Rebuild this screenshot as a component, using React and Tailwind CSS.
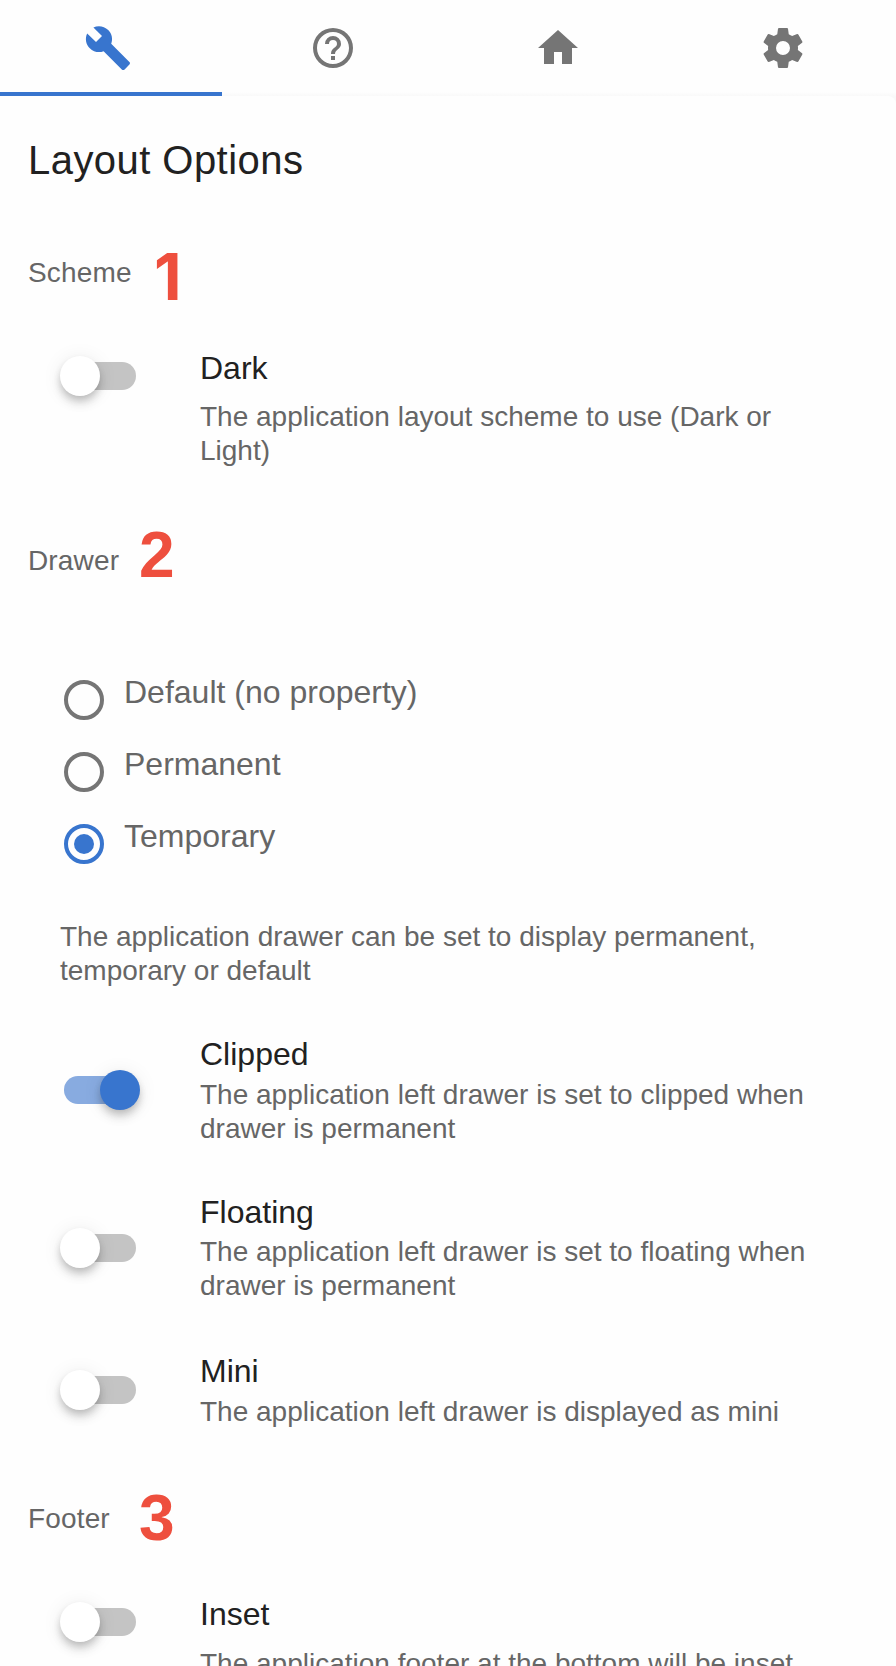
import React from "react";
import clsx from "clsx";

const ICONS = {
  wrench:
    "M22.7,19L13.6,9.9C14.5,7.6 14,4.9 12.1,3C10.1,1 7.1,0.6 4.7,1.7L9,6L6,9L1.6,4.7C0.4,7.1 0.9,10.1 2.9,12.1C4.8,14 7.5,14.5 9.8,13.6L18.9,22.7C19.3,23.1 19.9,23.1 20.3,22.7L22.6,20.4C23.1,20 23.1,19.3 22.7,19Z",
  help:
    "M11,18H13V16H11V18M12,2A10,10 0 0,0 2,12A10,10 0 0,0 12,22A10,10 0 0,0 22,12A10,10 0 0,0 12,2M12,20C7.59,20 4,16.41 4,12C4,7.59 7.59,4 12,4C16.41,4 20,7.59 20,12C20,16.41 16.41,20 12,20M12,6A4,4 0 0,0 8,10H10A2,2 0 0,1 12,8A2,2 0 0,1 14,10C14,12 11,11.75 11,15H13C13,12.75 16,12.5 16,10A4,4 0 0,0 12,6Z",
  home: "M10,20V14H14V20H19V12H22L12,3L2,12H5V20H10Z",
  cog:
    "M12,15.5A3.5,3.5 0 0,1 8.5,12A3.5,3.5 0 0,1 12,8.5A3.5,3.5 0 0,1 15.5,12A3.5,3.5 0 0,1 12,15.5M19.43,12.97C19.47,12.65 19.5,12.33 19.5,12C19.5,11.67 19.47,11.34 19.43,11L21.54,9.37C21.73,9.22 21.78,8.95 21.66,8.73L19.66,5.27C19.54,5.05 19.27,4.96 19.05,5.05L16.56,6.05C16.04,5.66 15.5,5.32 14.87,5.07L14.5,2.42C14.46,2.18 14.25,2 14,2H10C9.75,2 9.54,2.18 9.5,2.42L9.13,5.07C8.5,5.32 7.96,5.66 7.44,6.05L4.95,5.05C4.73,4.96 4.46,5.05 4.34,5.27L2.34,8.73C2.21,8.95 2.27,9.22 2.46,9.37L4.57,11C4.53,11.34 4.5,11.67 4.5,12C4.5,12.33 4.53,12.65 4.57,12.97L2.46,14.63C2.27,14.78 2.21,15.05 2.34,15.27L4.34,18.73C4.46,18.95 4.73,19.03 4.95,18.95L7.44,17.94C7.96,18.34 8.5,18.68 9.13,18.93L9.5,21.58C9.54,21.82 9.75,22 10,22H14C14.25,22 14.46,21.82 14.5,21.58L14.87,18.93C15.5,18.67 16.04,18.34 16.56,17.94L19.05,18.95C19.27,19.03 19.54,18.95 19.66,18.73L21.66,15.27C21.78,15.05 21.73,14.78 21.54,14.63L19.43,12.97Z",
};

function Tab({ icon, active }) {
  return (
    <button
      className={clsx(
        "flex w-[225px] shrink-0 flex-col items-center",
        active ? "text-[#3875ce]" : "text-[#757575]"
      )}
    >
      <svg viewBox="0 0 24 24" className="mt-6 mr-[3px] size-12" fill="currentColor">
        <path d={ICONS[icon]} />
      </svg>
      <span
        className={clsx(
          "mt-5 h-1 w-full",
          active ? "bg-[#3875ce]" : "bg-linear-to-b from-[#fefefe] to-[#f9f9f9]"
        )}
      />
    </button>
  );
}

function Switch({ on, className }) {
  return (
    <div
      role="switch"
      aria-checked={!!on}
      className={clsx("relative flex h-10 w-20 shrink-0 items-center", className)}
    >
      <span
        className={clsx(
          "ml-1 h-7 w-[72px] rounded-full",
          on ? "bg-[#88abe0]" : "bg-[#c4c4c4]"
        )}
      />
      <span
        className={clsx(
          "absolute top-0 size-10 rounded-full shadow-[0_4px_8px_-2px_rgba(0,0,0,0.2),0_8px_10px_0_rgba(0,0,0,0.1),0_2px_20px_0_rgba(0,0,0,0.08)]",
          on ? "right-0 bg-[#3875ce]" : "left-0 bg-white"
        )}
      />
    </div>
  );
}

function Heading({ label, number, labelClass, numberClass, className }) {
  return (
    <div className={clsx("flex h-16 items-start pl-7", className)}>
      <h2
        className={clsx(
          "shrink-0 text-[28px] leading-[34px] tracking-[0.15px] text-[#666]",
          labelClass
        )}
      >
        {label}
      </h2>
      <span
        className={clsx(
          "text-[64px] leading-[64px] font-bold text-[#ee4f3e]",
          numberClass
        )}
      >
        {number}
      </span>
    </div>
  );
}

function Option({ title, on, className, switchClass, descClass, children }) {
  return (
    <div className={clsx("flex items-start pl-[60px]", className)}>
      <Switch on={on} className={switchClass} />
      <div className="ml-[60px] min-w-0">
        <h3 className="text-[32px] leading-10 text-[#212121]">{title}</h3>
        <p
          className={clsx(
            "text-[28px] leading-[33.6px] whitespace-nowrap text-[#666]",
            descClass
          )}
        >
          {children}
        </p>
      </div>
    </div>
  );
}

function Radio({ label, checked }) {
  return (
    <div className="flex h-[72px] items-start pl-16">
      <span
        className={clsx(
          "mt-2 flex size-10 items-center justify-center rounded-full border-4",
          checked ? "border-[#3875ce]" : "border-[#757575]"
        )}
      >
        {checked && <span className="size-5 rounded-full bg-[#3875ce]" />}
      </span>
      <span className="ml-5 text-[32px] leading-10 text-[#666]">{label}</span>
    </div>
  );
}

export default function App() {
  return (
    <div className="h-[1666px] w-[896px] overflow-hidden bg-[#f9f9f9] font-['Liberation_Sans',Arial,sans-serif]">
      <nav className="-ml-[3px] flex h-24 w-[900px] bg-[#fefefe]">
        <Tab icon="wrench" active />
        <Tab icon="help" />
        <Tab icon="home" />
        <Tab icon="cog" />
      </nav>
      <main className="h-[1570px] overflow-hidden rounded-tr-lg bg-[#fefefe] pt-11">
        <h1 className="pl-7 text-[40px] leading-10 tracking-[0.45px] text-[#212121]">
          Layout Options
        </h1>

        <Heading
          label="Scheme"
          number="1"
          className="mt-[65px]"
          labelClass="mt-[11px] w-[126px]"
          numberClass="font-['Inter']"
        />
        <Option
          title="Dark"
          className="mt-[39px] h-[175px]"
          switchClass="mt-2"
          descClass="mt-3"
        >
          The application layout scheme to use (Dark or
          <br />
          Light)
        </Option>

        <Heading
          label="Drawer"
          number="2"
          labelClass="mt-[21px] w-[111px]"
        />
        <div className="mt-[85px]">
          <Radio label="Default (no property)" />
          <Radio label="Permanent" />
          <Radio label="Temporary" checked />
        </div>
        <p className="mt-8 h-[68px] pl-[60px] text-[28px] leading-[33.6px] text-[#666]">
          The application drawer can be set to display permanent,
          <br />
          temporary or default
        </p>

        <Option
          title="Clipped"
          on
          className="mt-[46px] h-[158px]"
          switchClass="mt-9"
          descClass="mt-1"
        >
          The application left drawer is set to clipped when
          <br />
          drawer is permanent
        </Option>
        <Option
          title="Floating"
          className="h-[159px]"
          switchClass="mt-9"
          descClass="mt-[3px]"
        >
          The application left drawer is set to floating when
          <br />
          drawer is permanent
        </Option>
        <Option
          title="Mini"
          className="h-[135px]"
          switchClass="mt-[19px]"
          descClass="mt-1"
        >
          The application left drawer is displayed as mini
        </Option>

        <Heading
          label="Footer"
          number="3"
          labelClass="mt-4 w-[111px]"
        />
        <Option
          title="Inset"
          className="mt-11"
          switchClass="mt-2"
          descClass="mt-[13px]"
        >
          The application footer at the bottom will be inset
        </Option>
      </main>
    </div>
  );
}
